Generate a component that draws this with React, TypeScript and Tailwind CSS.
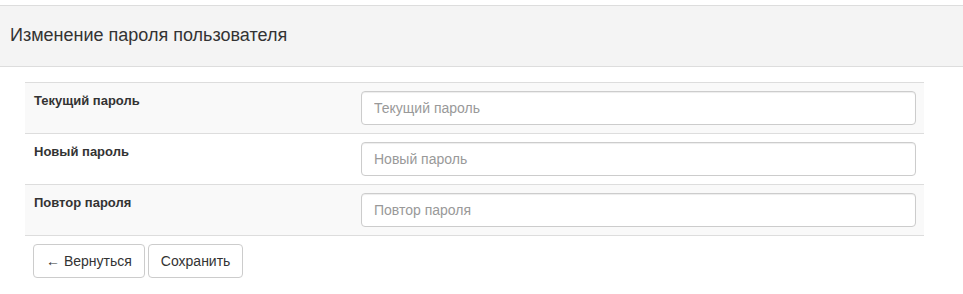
const rows = [
  { label: 'Текущий пароль', striped: true },
  { label: 'Новый пароль', striped: false },
  { label: 'Повтор пароля', striped: true },
];

function App() {
  return (
    <div className="w-full min-h-screen bg-white text-[#333] text-[14px] leading-[20px] font-['Liberation_Sans',Arial,sans-serif]">
      {/* Panel heading */}
      <div className="mt-[5px] h-[62px] flex items-center px-[10px] bg-[#f4f4f4] border-y border-[#ddd]">
        <h3 className="text-[18px] leading-[20px] font-normal pb-[2px]">Изменение пароля пользователя</h3>
      </div>

      {/* Form table */}
      <div className="ml-[25px] w-[899px] mt-[15px]">
        {rows.map((row) => (
          <div
            key={row.label}
            className={`flex border-t border-[#ddd] ${row.striped ? 'bg-[#f9f9f9]' : 'bg-white'}`}
          >
            <div className="w-[328px] pt-[7px] px-[8px] pl-[9px]">
              <label className="font-bold text-[13px] leading-[20px]">{row.label}</label>
            </div>
            <div className="flex-1 p-[8px]">
              <input
                type="password"
                placeholder={row.label}
                className="w-full h-[34px] px-[12px] py-[6px] bg-white border border-[#ccc] rounded-[4px] text-[14px] text-[#555] placeholder:text-[#999] shadow-[inset_0_1px_1px_rgba(0,0,0,0.075)] outline-none"
              />
            </div>
          </div>
        ))}
        <div className="border-t border-[#ddd]" />

        {/* Actions */}
        <div className="flex gap-[3px] pl-[8px] pt-[8px]">
          <button className="h-[34px] px-[12px] bg-white border border-[#ccc] rounded-[4px] text-[14px] text-[#333]">
            ← Вернуться
          </button>
          <button className="h-[34px] px-[12px] bg-white border border-[#ccc] rounded-[4px] text-[14px] text-[#333]">
            Сохранить
          </button>
        </div>
      </div>
    </div>
  );
}

export default App;
